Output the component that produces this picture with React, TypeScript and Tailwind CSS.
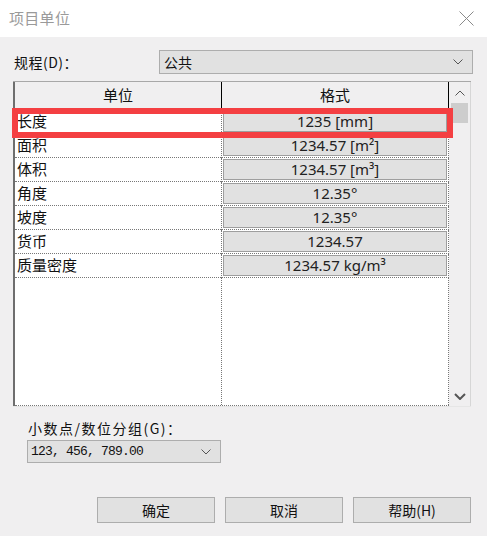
import React from "react";

const cjk = { fontFamily: '"Noto Sans CJK SC", "Noto Sans", sans-serif' };
const num = { fontFamily: '"Noto Sans", "Noto Sans CJK SC", sans-serif' };

function Chevron({ className = "" }: { className?: string }) {
  return (
    <svg width="10" height="6" viewBox="0 0 10 6" className={className}>
      <path d="M0.5 0.5 L5 5 L9.5 0.5" fill="none" stroke="#555" strokeWidth="1" />
    </svg>
  );
}

const rows: [string, string][] = [
  ["长度", "1235 [mm]"],
  ["面积", "1234.57 [m²]"],
  ["体积", "1234.57 [m³]"],
  ["角度", "12.35°"],
  ["坡度", "12.35°"],
  ["货币", "1234.57"],
  ["质量密度", "1234.57 kg/m³"],
];

export default function App() {
  return (
    <div className="relative w-[487px] h-[536px] bg-[#f0eff0] flex flex-col text-[#111]" style={cjk}>
      {/* title bar */}
      <div className="h-[37px] bg-white flex items-center justify-between pl-[9px] pr-[13px]">
        <span className="text-[15px] text-[#9a9a9a] tracking-[0.3px]">项目单位</span>
        <svg width="15" height="15" viewBox="0 0 15 15">
          <path d="M0.5 0.5 L14.5 14.5 M14.5 0.5 L0.5 14.5" stroke="#8a8a8a" strokeWidth="1" />
        </svg>
      </div>

      {/* discipline row */}
      <div className="mt-[13px] flex items-center h-[24px]">
        <span className="w-[159px] pl-[14px] text-[14px] tracking-[0.5px]">规程(D)：</span>
        <div className="w-[314px] h-[24px] bg-[#e1e1e1] border border-[#adadad] flex items-center justify-between pl-[4px] pr-[9px]">
          <span className="text-[14px]">公共</span>
          <Chevron />
        </div>
      </div>

      {/* table */}
      <div className="mt-[7px] ml-[13px] w-[458px] h-[326px] flex border-t border-[#a8a8a8] border-b border-b-[#e6e6e6]">
        <div className="w-[436px] h-full flex flex-col border-l-2 border-[#6e6e6e] bg-white">
          <div className="h-[28px] flex bg-[#f0eff0] border-b border-[#d8d8d8]">
            <div className="w-[206px] flex items-center justify-center text-[15px]">单位</div>
            <div className="w-[1px] bg-black" />
            <div className="w-[226px] flex items-center justify-center text-[15px]">格式</div>
            <div className="w-[1px] bg-black" />
          </div>
          <div className="flex-1 flex flex-col">
            {rows.map(([a, b]) => (
              <div key={a} className="h-[24px] flex">
                <div className="w-[206px] pl-[2px] flex items-center text-[15px] border-b border-dotted border-[#777]">
                  {a}
                </div>
                <div className="w-[228px] border-l border-r border-b border-dotted border-[#777] p-[1px]">
                  <div className="h-full bg-[#e1e1e1] border border-[#9e9e9e] flex items-center justify-center text-[15px] text-[#222]" style={num}>
                    {b}
                  </div>
                </div>
              </div>
            ))}
            <div className="flex-1 flex border-b border-dotted border-[#777]">
              <div className="w-[206px]" />
              <div className="w-[228px] border-l border-r border-dotted border-[#777]" />
            </div>
          </div>
        </div>
        {/* scrollbar */}
        <div className="flex-1 flex flex-col items-stretch border-r border-[#d6d6d6] bg-[#f0eff0]">
          <div className="h-[21px] flex items-center justify-center">
            <Chevron className="rotate-180" />
          </div>
          <div className="h-[20px] mx-[2px] bg-[#cdcdcd]" />
          <div className="flex-1" />
          <div className="h-[20px] flex items-center justify-center">
            <svg width="12" height="7" viewBox="0 0 12 7">
              <path d="M1 1 L6 6 L11 1" fill="none" stroke="#555" strokeWidth="2" />
            </svg>
          </div>
        </div>
      </div>

      {/* decimal grouping */}
      <div className="mt-[11px] pl-[28px] text-[14px] h-[20px] leading-[20px] tracking-[1.5px]">小数点/数位分组(G)：</div>
      <div className="mt-[2px] ml-[27px] w-[194px] h-[23px] bg-[#e1e1e1] border border-[#adadad] flex items-center justify-between pl-[3px] pr-[9px]">
        <span className="text-[13px] tracking-[-0.8px]" style={{ fontFamily: '"Liberation Mono", monospace' }}>123, 456, 789.00</span>
        <Chevron />
      </div>

      {/* buttons */}
      <div className="mt-[34px] flex justify-end gap-[10px] pr-[16px]">
        <div className="w-[118px] h-[26px] bg-[#e1e1e1] border border-[#adadad] flex items-center justify-center text-[14px]">确定</div>
        <div className="w-[118px] h-[26px] bg-[#e1e1e1] border border-[#adadad] flex items-center justify-center text-[14px]">取消</div>
        <div className="w-[118px] h-[26px] bg-[#e1e1e1] border border-[#adadad] flex items-center justify-center text-[14px]">帮助(H)</div>
      </div>

      {/* red highlight */}
      <div className="absolute left-[12px] top-[108px] w-[441px] h-[30px] border-[6px] border-[#f43f42]" />
    </div>
  );
}
